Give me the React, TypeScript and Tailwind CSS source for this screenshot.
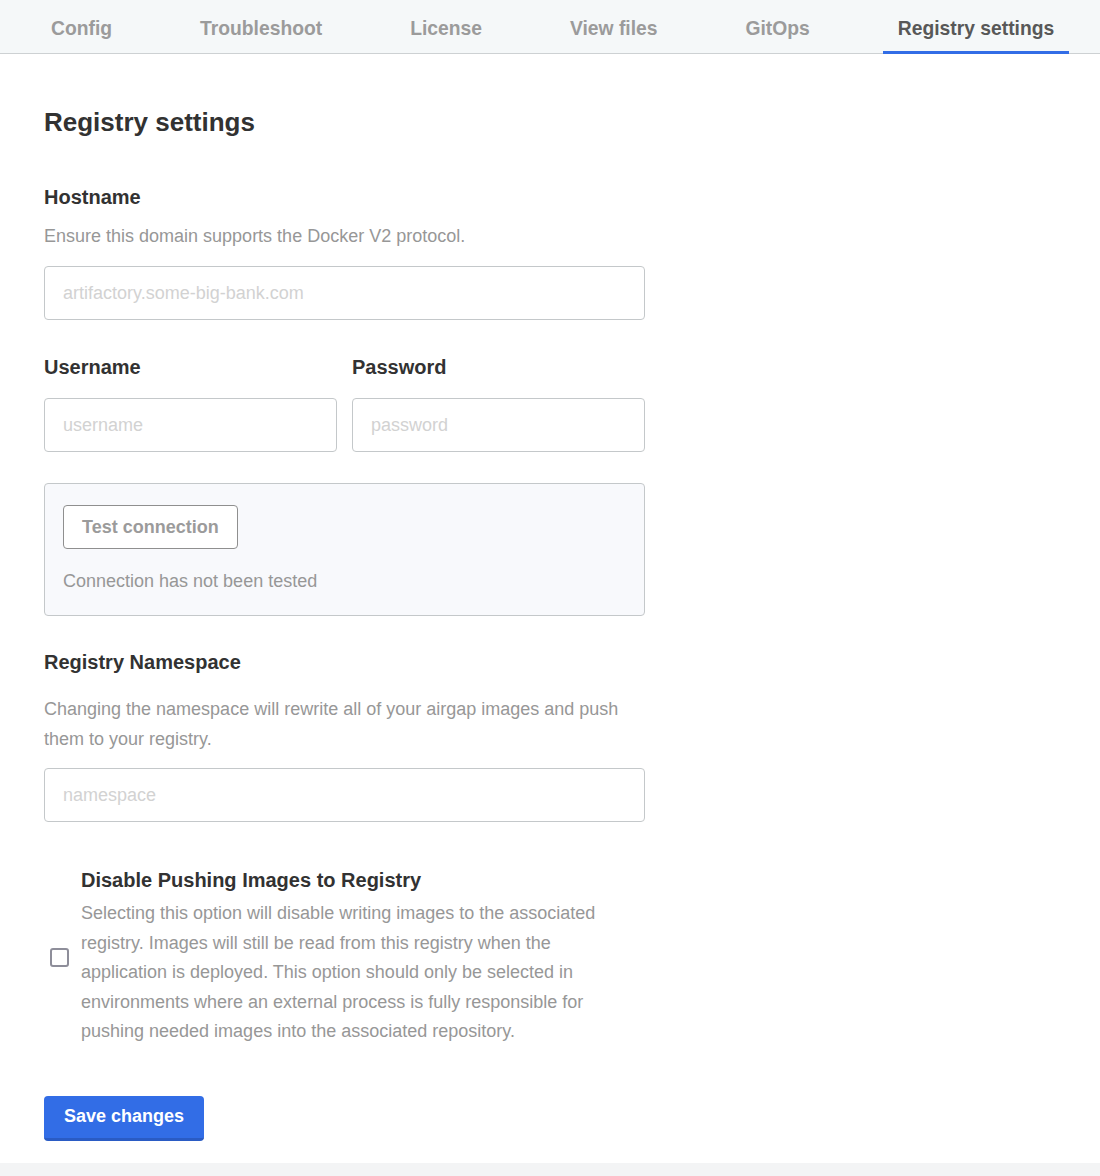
import { useState } from 'react';

const TABS = ['Config', 'Troubleshoot', 'License', 'View files', 'GitOps', 'Registry settings'];

function TextInput({ placeholder, type = 'text' }: { placeholder: string; type?: string }) {
  return (
    <input
      type={type}
      placeholder={placeholder}
      className="w-full h-[54px] px-[18px] rounded-[4px] border border-[#c4c8ca] bg-white text-[18px] text-[#323232] placeholder:text-[#d2d2d2] outline-none"
    />
  );
}

export default function App() {
  const [active] = useState('Registry settings');
  const [disablePush, setDisablePush] = useState(false);

  return (
    <div className="min-h-[1176px] flex flex-col bg-white font-['Liberation_Sans',Arial,sans-serif]">
      <div className="h-[54px] bg-[#f5f8f9] border-b border-[#cdd1d3]">
        <div className="flex h-[53px] pl-[36px] gap-[58px]">
          {TABS.map((tab) => (
            <div
              key={tab}
              className={
                tab === active
                  ? 'h-[54px] px-[15px] pt-[8px] flex items-center border-b-[3px] border-[#326de6] text-[19.3px] font-bold text-[#585858]'
                  : 'h-[54px] px-[15px] pt-[8px] flex items-center border-b-[3px] border-transparent text-[19.3px] font-bold text-[#9b9b9b]'
              }
            >
              {tab}
            </div>
          ))}
        </div>
      </div>

      <div className="flex-1 px-[44px] pt-[52px]">
        <div className="w-[601px]">
          <h1 className="text-[26px] leading-[32px] font-bold text-[#323232]">Registry settings</h1>

          <div className="mt-[47px]">
            <div className="text-[20px] leading-[24px] font-bold text-[#323232]">Hostname</div>
            <p className="mt-[15px] text-[18px] leading-[24px] text-[#979797]">
              Ensure this domain supports the Docker V2 protocol.
            </p>
            <div className="mt-[18px]">
              <TextInput placeholder="artifactory.some-big-bank.com" />
            </div>
          </div>

          <div className="mt-[35px] grid grid-cols-2 gap-[15px]">
            <div>
              <div className="text-[20px] leading-[24px] font-bold text-[#323232]">Username</div>
              <div className="mt-[19px]">
                <TextInput placeholder="username" />
              </div>
            </div>
            <div>
              <div className="text-[20px] leading-[24px] font-bold text-[#323232]">Password</div>
              <div className="mt-[19px]">
                <TextInput placeholder="password" type="password" />
              </div>
            </div>
          </div>

          <div className="mt-[31px] rounded-[4px] border border-[#c4c8ca] bg-[#f8f9fc] px-[18px] pt-[21px] pb-[22px]">
            <button className="h-[44px] px-[18px] rounded-[4px] border border-[#8f8f8f] bg-white text-[18px] font-bold text-[#9b9b9b]">
              Test connection
            </button>
            <p className="mt-[20px] text-[18px] leading-[24px] text-[#979797]">Connection has not been tested</p>
          </div>

          <div className="mt-[34px]">
            <div className="text-[20px] leading-[24px] font-bold text-[#323232]">Registry Namespace</div>
            <p className="mt-[20px] text-[18px] leading-[30px] text-[#979797]">
              Changing the namespace will rewrite all of your airgap images and push
              <br />
              them to your registry.
            </p>
            <div className="mt-[14px]">
              <TextInput placeholder="namespace" />
            </div>
          </div>

          <label className="mt-[46px] flex items-center gap-[12px] pl-[6px] cursor-pointer">
            <input
              type="checkbox"
              checked={disablePush}
              onChange={(e) => setDisablePush(e.target.checked)}
              className="sr-only"
            />
            <span className="w-[19px] h-[19px] shrink-0 rounded-[3px] border-2 border-[#8e8e9a] bg-white" />
            <span className="flex flex-col">
              <span className="text-[20px] leading-[24px] font-bold text-[#323232]">
                Disable Pushing Images to Registry
              </span>
              <span className="mt-[7px] text-[18px] leading-[29.5px] text-[#979797]">
                Selecting this option will disable writing images to the associated
                <br />
                registry. Images will still be read from this registry when the
                <br />
                application is deployed. This option should only be selected in
                <br />
                environments where an external process is fully responsible for
                <br />
                pushing needed images into the associated repository.
              </span>
            </span>
          </label>

          <button className="mt-[49px] h-[45px] px-[20px] rounded-[4px] bg-[#326de6] border-b-[3px] border-[#2a5bc4] text-[18px] font-bold text-white">
            Save changes
          </button>
        </div>
      </div>

      <div className="h-[13px] bg-[#f3f4f5]" />
    </div>
  );
}
